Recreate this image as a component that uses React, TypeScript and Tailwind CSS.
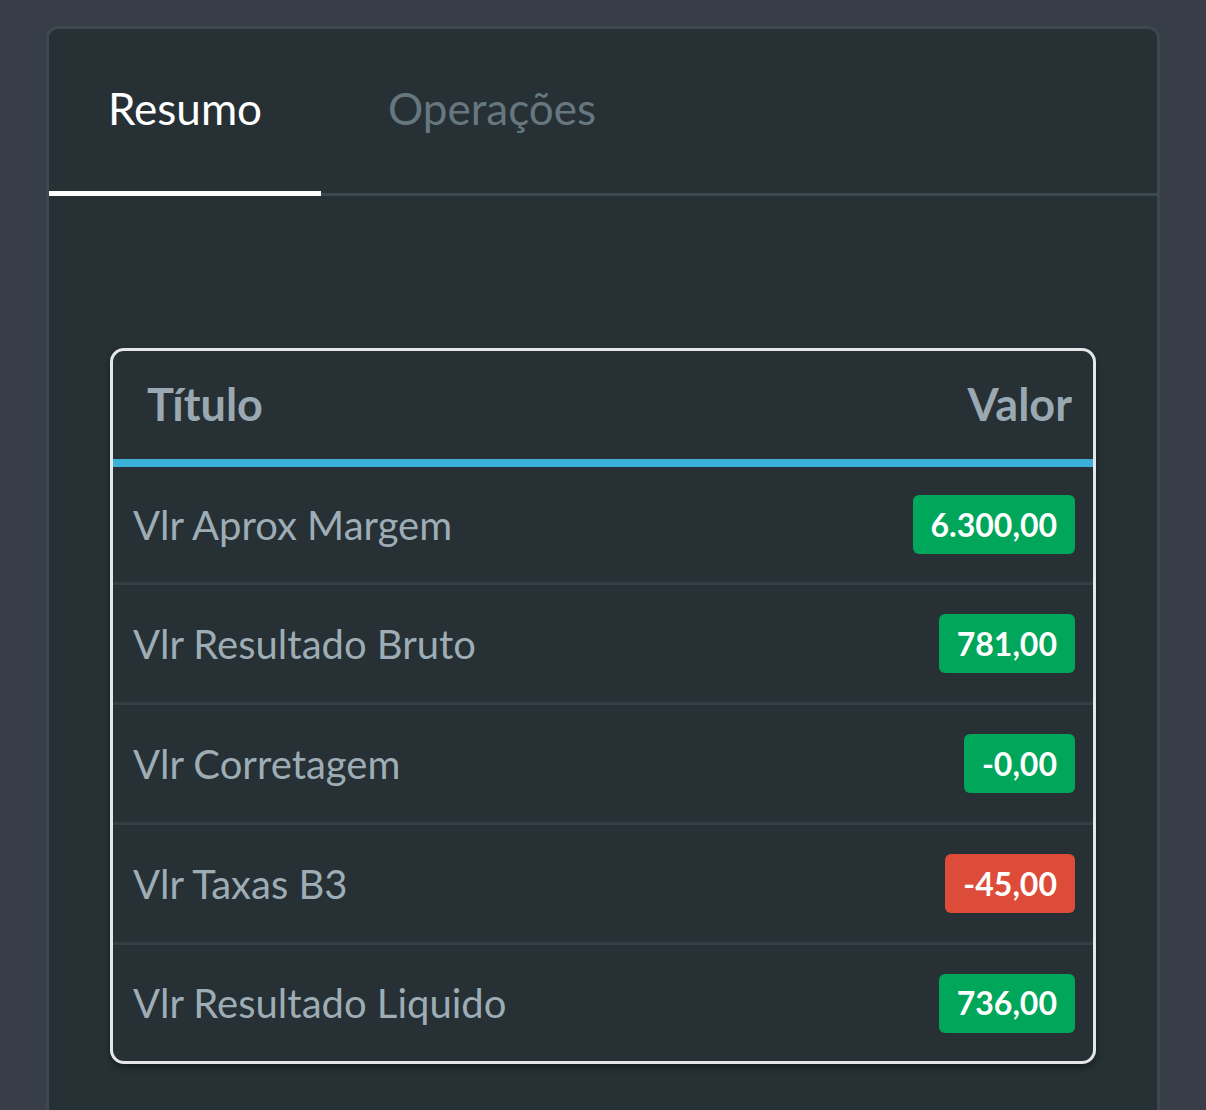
import React from "react"

const rows = [
  { title: "Vlr Aprox Margem", value: "6.300,00", positive: true, h: "h-[118px] border-b-[3px]" },
  { title: "Vlr Resultado Bruto", value: "781,00", positive: true, h: "h-[120px] border-b-[3px]" },
  { title: "Vlr Corretagem", value: "-0,00", positive: true, h: "h-[120px] border-b-[3px]" },
  { title: "Vlr Taxas B3", value: "-45,00", positive: false, h: "h-[120px] border-b-[3px]" },
  { title: "Vlr Resultado Liquido", value: "736,00", positive: true, h: "h-[116px]" },
]

export default function App() {
  return (
    <div
      className="min-h-[1110px] bg-[#383e47] pt-[26px] pl-[46px] pr-[46px]"
      style={{ fontFamily: "Lato, 'Open Sans', sans-serif" }}
    >
      <div className="h-[1100px] rounded-t-[12px] border-[3px] border-b-0 border-[#3c4850] bg-[#263035]">
        {/* tabs */}
        <div className="flex h-[167px] border-b-[3px] border-[#3a4850]">
          <div className="relative flex w-[272px] items-center justify-center pb-[6px]">
            <span className="text-[44px] text-white">Resumo</span>
            <div className="absolute -bottom-[3px] left-0 right-0 h-[5px] bg-white" />
          </div>
          <div className="flex items-center px-[67px] pb-[6px]">
            <span className="text-[44px] text-[#67777f]">Operações</span>
          </div>
        </div>

        {/* content */}
        <div className="px-[61px] pt-[152px]">
          <div className="overflow-hidden rounded-[14px] border-[3px] border-[#e4e6e7] shadow-[0_4px_6px_rgba(0,0,0,0.35)]">
            <div className="flex h-[108px] items-center justify-between pl-[34px] pr-[21px]">
              <span className="text-[45px] font-bold text-[#9aa9b1]">Título</span>
              <span className="text-[45px] font-bold text-[#9aa9b1]">Valor</span>
            </div>
            <div className="h-[8px] bg-[#3bb0d8]" />
            {rows.map((r) => (
              <div
                key={r.title}
                className={"flex items-center justify-between border-[#343f45] pl-[20px] pr-[18px] " + r.h}
              >
                <span className="text-[40px] text-[#9eadb5]">{r.title}</span>
                <span
                  className={
                    "flex h-[59px] items-center rounded-[6px] px-[18px] text-[32px] font-bold text-white " +
                    (r.positive ? "bg-[#00a65a]" : "bg-[#dd4b39]")
                  }
                >
                  {r.value}
                </span>
              </div>
            ))}
          </div>
        </div>
      </div>
    </div>
  )
}
